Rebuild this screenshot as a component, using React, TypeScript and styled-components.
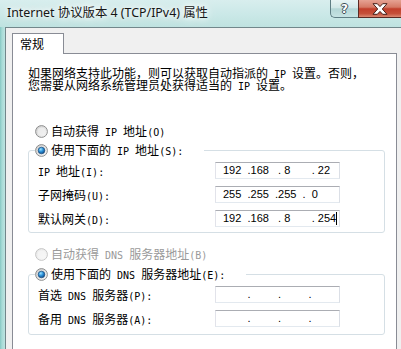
import React, { useId } from "react";
import styled, { createGlobalStyle } from "styled-components";

const GlobalStyle = createGlobalStyle`
  html, body { margin: 0; padding: 0; background: #f0f0f0; }
  body { width: 401px; height: 349px; overflow: hidden; }
  * { box-sizing: border-box; }
`;

const CJK = `"Noto Sans CJK SC", "Noto Sans", sans-serif`;

const Window = styled.div`
  width: 401px;
  height: 349px;
  display: flex;
  flex-direction: column;
  overflow: hidden;
  background: linear-gradient(90deg, #86c8c3 0px, #a8dbd7 2px, #bde4e1 5px);
  font-family: ${CJK};
  color: #000;
`;

const TitleBar = styled.div`
  height: 27px;
  flex: none;
  display: flex;
  align-items: flex-start;
  justify-content: space-between;
  background: linear-gradient(180deg, #d8eeee 0%, #cae8e7 55%, #bfe2e0 100%);
`;

const Title = styled.div`
  padding: 5px 0 0 7px;
  font-family: "Noto Sans", "Noto Sans CJK SC", sans-serif;
  font-size: 12.4px;
  line-height: 16px;
  color: #161616;
  white-space: nowrap;
  text-shadow: 0 0 5px #fff, 0 0 9px #fff, 0 0 14px rgba(255, 255, 255, 0.9);
`;

const Caption = styled.div`
  display: flex;
  align-items: flex-start;
`;

const HelpButton = styled.div`
  width: 28px;
  height: 18px;
  border: 1px solid #5f7e84;
  border-top: none;
  border-right: none;
  border-radius: 0 0 0 5px;
  background: linear-gradient(180deg, #e8f4f4 0%, #d2e8e8 45%, #b4d6d6 52%, #c6e3e3 100%);
  display: flex;
  align-items: center;
  justify-content: center;
  font: bold 12px/1 "DejaVu Sans", sans-serif;
  color: #fff;
  text-shadow: 1px 0 #3d4f55, -1px 0 #3d4f55, 0 1px #3d4f55, 0 -1px #3d4f55;
`;

const CloseButton = styled.div`
  width: 43px;
  height: 18px;
  border: 1px solid #5b2a23;
  border-top: none;
  border-right: none;
  background: linear-gradient(180deg, #e6a293 0%, #d57a66 42%, #c23f2b 52%, #c5503a 80%, #dc8a73 100%);
  display: flex;
  align-items: center;
  justify-content: center;
`;

const CloseSvg = styled.svg`
  display: block;
`;

const Client = styled.div`
  flex: 1;
  margin-left: 5px;
  border-left: 1px solid #72878b;
  border-top: 1px solid #72878b;
  background: #f0f0f0;
  padding: 5px 4px 0 6px;
  display: flex;
  flex-direction: column;
`;

const TabStrip = styled.div`
  display: flex;
  flex: none;
`;

const Tab = styled.div`
  width: 52px;
  height: 21px;
  margin-bottom: -1px;
  position: relative;
  z-index: 1;
  background: #fff;
  border: 1px solid #898c95;
  border-bottom: none;
  padding: 2px 0 0 7px;
  font-size: 12px;
  line-height: 16px;
`;

const TabPanel = styled.div`
  flex: 1;
  background: #fff;
  border: 1px solid #898c95;
  border-bottom: none;
  padding: 13px 11px 0 15px;
  display: flex;
  flex-direction: column;
`;

const Intro = styled.p`
  margin: 0;
  font-size: 12px;
  line-height: 12px;
  white-space: nowrap;
`;

const Half = styled.span`
  font-family: "DejaVu Sans Mono", monospace;
  font-size: 10px;
  line-height: 0;
`;

function sim(text: string) {
  const parts = text.split(/([\x20-\x7e]+)/);
  return parts
    .filter((p) => p !== "")
    .map((p, i) => (/^[\x20-\x7e]+$/.test(p) ? <Half key={i}>{p}</Half> : <React.Fragment key={i}>{p}</React.Fragment>));
}

const OptionRow = styled.div<{ $top: number }>`
  margin-top: ${(p) => p.$top}px;
  padding-left: 7px;
  height: 16px;
  display: flex;
  align-items: center;
  gap: 3px;
`;

const LegendRow = styled.div`
  height: 16px;
  display: flex;
  align-items: center;
  gap: 3px;
`;

const OptionText = styled.span<{ $disabled?: boolean }>`
  font-size: 12px;
  line-height: 16px;
  white-space: nowrap;
  color: ${(p) => (p.$disabled ? "#9a9a9a" : "#000")};
`;

const Group = styled.fieldset<{ $top: number; $bottom: number }>`
  margin: ${(p) => p.$top}px 0 0 0;
  padding: 0 0 ${(p) => p.$bottom}px 9px;
  min-width: 0;
  border: 1px solid #d5dfe5;
  border-radius: 3px;
`;

const Legend = styled.legend`
  margin-left: -3px;
  padding: 0 21px 0 0;
  height: 16px;
`;

const Fields = styled.div`
  padding-top: 4px;
  display: grid;
  grid-template-columns: 177px 125px;
  grid-auto-rows: 17px;
  row-gap: 7px;
  align-items: center;
`;

const FieldLabel = styled.span`
  font-size: 12px;
  line-height: 16px;
  white-space: nowrap;
`;

const IpBox = styled.div`
  width: 125px;
  height: 17px;
  background: #fff;
  border: 1px solid;
  border-color: #abadb3 #dbdfe6 #e3e9ef #e2e3ea;
  padding-left: 7px;
  display: flex;
  align-items: center;
  font-family: "Liberation Sans", Arial, sans-serif;
  font-size: 11px;
  line-height: 15px;
  white-space: pre;
  color: #000;
`;

const Caret = styled.span`
  display: inline-block;
  width: 1px;
  height: 13px;
  background: #000;
`;

const RadioSvg = styled.svg`
  display: block;
  flex: none;
`;

function Radio({ checked = false, disabled = false }: { checked?: boolean; disabled?: boolean }) {
  const id = useId().replace(/:/g, "");
  return (
    <RadioSvg width="13" height="13" viewBox="0 0 13 13">
      <defs>
        <linearGradient id={`f${id}`} x1="0" y1="0" x2="1" y2="1">
          <stop offset="0" stopColor={disabled ? "#e6e6e6" : "#c9c9c9"} />
          <stop offset="1" stopColor={disabled ? "#fbfbfb" : "#fafafa"} />
        </linearGradient>
        <radialGradient id={`d${id}`} cx="0.38" cy="0.32" r="0.75">
          <stop offset="0" stopColor="#9fe3ff" />
          <stop offset="0.45" stopColor="#2f95dc" />
          <stop offset="1" stopColor="#0b3f7a" />
        </radialGradient>
      </defs>
      <circle cx="6.5" cy="6.5" r="5.9" fill={`url(#f${id})`} stroke={disabled ? "#c6c6c6" : "#8e8f8f"} strokeWidth="1" />
      <circle cx="6.5" cy="6.5" r="3.9" fill={disabled ? "#f6f6f6" : "#f2f2f2"} opacity={checked ? 0 : 0.7} />
      {checked && <circle cx="6.5" cy="6.5" r="3.3" fill={`url(#d${id})`} stroke="#1b4d80" strokeWidth="0.7" />}
    </RadioSvg>
  );
}

const ipRows = [
  { label: "IP 地址(I):", value: "192  .168   . 8       . 22" },
  { label: "子网掩码(U):", value: "255  .255  .255  .  0" },
  { label: "默认网关(D):", value: "192  .168   . 8       . 254", caret: true },
];

const dnsRows = [
  { label: "首选 DNS 服务器(P):", value: "        .         .         ." },
  { label: "备用 DNS 服务器(A):", value: "        .         .         ." },
];

export default function App() {
  return (
    <>
      <GlobalStyle />
      <Window>
        <TitleBar>
          <Title>Internet 协议版本 4 (TCP/IPv4) 属性</Title>
          <Caption>
            <HelpButton>?</HelpButton>
            <CloseButton>
              <CloseSvg width="16" height="12" viewBox="0 0 16 12">
                <path
                  d="M1 0.7 H5.3 L8 3.6 L10.7 0.7 H15 L10.3 6 L15 11.3 H10.7 L8 8.4 L5.3 11.3 H1 L5.7 6 Z"
                  fill="#fff"
                  stroke="#46201a"
                  strokeWidth="1"
                  strokeLinejoin="round"
                />
              </CloseSvg>
            </CloseButton>
          </Caption>
        </TitleBar>
        <Client>
          <TabStrip>
            <Tab>常规</Tab>
          </TabStrip>
          <TabPanel>
            <Intro>
              {sim("如果网络支持此功能，则可以获取自动指派的 IP 设置。否则，")}
              <br />
              {sim("您需要从网络系统管理员处获得适当的 IP 设置。")}
            </Intro>
            <OptionRow $top={32}>
              <Radio />
              <OptionText>{sim("自动获得 IP 地址(O)")}</OptionText>
            </OptionRow>
            <Group $top={3} $bottom={5}>
              <Legend>
                <LegendRow>
                  <Radio checked />
                  <OptionText>{sim("使用下面的 IP 地址(S):")}</OptionText>
                </LegendRow>
              </Legend>
              <Fields>
                {ipRows.map((r) => (
                  <React.Fragment key={r.label}>
                    <FieldLabel>{sim(r.label)}</FieldLabel>
                    <IpBox>
                      {r.value}
                      {r.caret && <Caret />}
                    </IpBox>
                  </React.Fragment>
                ))}
              </Fields>
            </Group>
            <OptionRow $top={13}>
              <Radio disabled />
              <OptionText $disabled>{sim("自动获得 DNS 服务器地址(B)")}</OptionText>
            </OptionRow>
            <Group $top={4} $bottom={7}>
              <Legend>
                <LegendRow>
                  <Radio checked />
                  <OptionText>{sim("使用下面的 DNS 服务器地址(E):")}</OptionText>
                </LegendRow>
              </Legend>
              <Fields>
                {dnsRows.map((r) => (
                  <React.Fragment key={r.label}>
                    <FieldLabel>{sim(r.label)}</FieldLabel>
                    <IpBox>{r.value}</IpBox>
                  </React.Fragment>
                ))}
              </Fields>
            </Group>
          </TabPanel>
        </Client>
      </Window>
    </>
  );
}
